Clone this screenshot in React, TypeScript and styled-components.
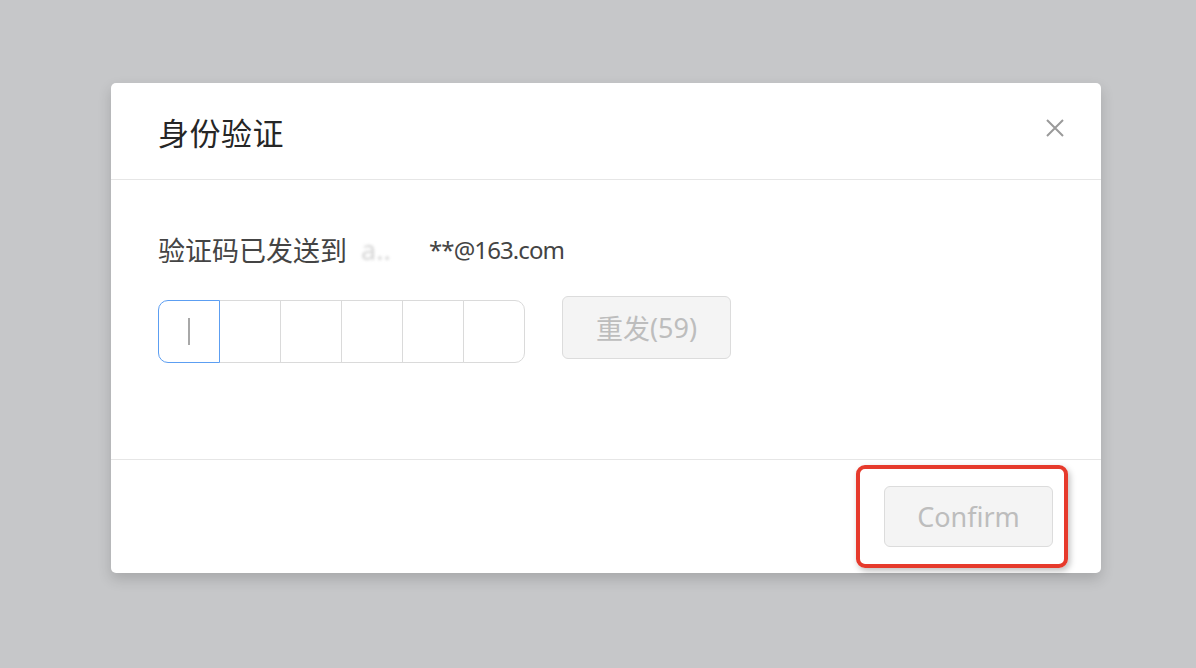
import React from "react";
import styled, { createGlobalStyle } from "styled-components";

const Global = createGlobalStyle`
  html, body { margin: 0; padding: 0; }
  body {
    background: #c6c7c9;
    font-family: "Noto Sans", "Noto Sans CJK SC", sans-serif;
    width: 1196px;
    height: 668px;
    overflow: hidden;
  }
`;

const Page = styled.div`
  display: flex;
  padding: 83px 0 0 111px;
`;

const Modal = styled.div`
  width: 990px;
  height: 490px;
  background: #fff;
  border-radius: 5px;
  box-shadow: 0 6px 14px rgba(0, 0, 0, 0.16);
  display: flex;
  flex-direction: column;
`;

const Header = styled.div`
  height: 97px;
  box-sizing: border-box;
  display: flex;
  align-items: center;
  justify-content: space-between;
  padding: 0 36px 0 47px;
  border-bottom: 1px solid #e6e6e6;
`;

const Title = styled.div`
  font-family: "Noto Sans CJK SC", sans-serif;
  font-size: 31px;
  color: #262626;
  letter-spacing: 0.5px;
`;

const Close = styled.button`
  border: 0;
  background: none;
  padding: 0;
  width: 20px;
  height: 20px;
  display: flex;
  margin-top: -6px;
  cursor: pointer;
`;

const Body = styled.div`
  height: 280px;
  box-sizing: border-box;
  padding: 50px 47px 0 47px;
  border-bottom: 1px solid #e6e6e6;
  display: flex;
  flex-direction: column;
  gap: 26px;
`;

const Hint = styled.div`
  font-size: 27px;
  color: #444;
  line-height: 40px;
  display: flex;
  align-items: center;
`;

const Cn = styled.span`
  font-family: "Noto Sans CJK SC", sans-serif;
`;

const Latin = styled.span`
  font-size: 24px;
  letter-spacing: -0.9px;
`;

const Masked = styled.span`
  display: inline-block;
  width: 82px;
  color: #d4d4d4;
  filter: blur(1.5px);
  padding-left: 14px;
  box-sizing: border-box;
`;

const Row = styled.div`
  display: flex;
  align-items: flex-start;
  gap: 37px;
`;

const Otp = styled.div`
  display: flex;
  margin-top: 4px;
`;

const Cell = styled.div<{ $active?: boolean; $first?: boolean; $last?: boolean }>`
  width: 62px;
  height: 63px;
  box-sizing: border-box;
  border: 1px solid ${(p) => (p.$active ? "#5c9ef2" : "#dadada")};
  margin-left: ${(p) => (p.$first ? "0" : "-1px")};
  position: relative;
  z-index: ${(p) => (p.$active ? 1 : 0)};
  border-radius: ${(p) => (p.$first ? "10px 0 0 10px" : p.$last ? "0 10px 10px 0" : "0")};
  display: flex;
  align-items: center;
  justify-content: center;
  background: #fff;
`;

const Caret = styled.span`
  width: 2px;
  height: 27px;
  background: #a8a8a8;
`;

const GrayButton = styled.button<{ $w: number; $h: number }>`
  width: ${(p) => p.$w}px;
  height: ${(p) => p.$h}px;
  background: #f4f4f4;
  border: 1px solid #dcdcdc;
  border-radius: 6px;
  color: #bdbdbd;
  font-size: 27px;
  font-family: "Noto Sans", "Noto Sans CJK SC", sans-serif;
  padding: 0;
  display: flex;
  align-items: center;
  justify-content: center;
`;

const Footer = styled.div`
  flex: 1;
  display: flex;
  justify-content: flex-end;
  align-items: center;
  padding-right: 48px;
`;

const Annotated = styled.div`
  position: relative;
  display: flex;
`;

const RedBox = styled.div`
  position: absolute;
  left: -28px;
  top: -21px;
  right: -15px;
  bottom: -21px;
  border: 4px solid #e63a2c;
  border-radius: 9px;
  box-shadow: 2px 3px 6px rgba(0, 0, 0, 0.25);
  pointer-events: none;
`;

export default function App() {
  return (
    <>
      <Global />
      <Page>
        <Modal>
          <Header>
            <Title>身份验证</Title>
            <Close aria-label="close">
              <svg width="20" height="20" viewBox="0 0 20 20">
                <path d="M2 2 L18 18 M18 2 L2 18" stroke="#9a9a9a" strokeWidth="2" fill="none" />
              </svg>
            </Close>
          </Header>
          <Body>
            <Hint>
              <Cn>验证码已发送到</Cn>
              <Masked>a..</Masked>
              <Latin>**@163.com</Latin>
            </Hint>
            <Row>
              <Otp>
                {[0, 1, 2, 3, 4, 5].map((i) => (
                  <Cell key={i} $active={i === 0} $first={i === 0} $last={i === 5}>
                    {i === 0 && <Caret />}
                  </Cell>
                ))}
              </Otp>
              <GrayButton $w={169} $h={63}>
                <Cn>重发</Cn>(59)
              </GrayButton>
            </Row>
          </Body>
          <Footer>
            <Annotated>
              <GrayButton $w={169} $h={61}>Confirm</GrayButton>
              <RedBox />
            </Annotated>
          </Footer>
        </Modal>
      </Page>
    </>
  );
}
